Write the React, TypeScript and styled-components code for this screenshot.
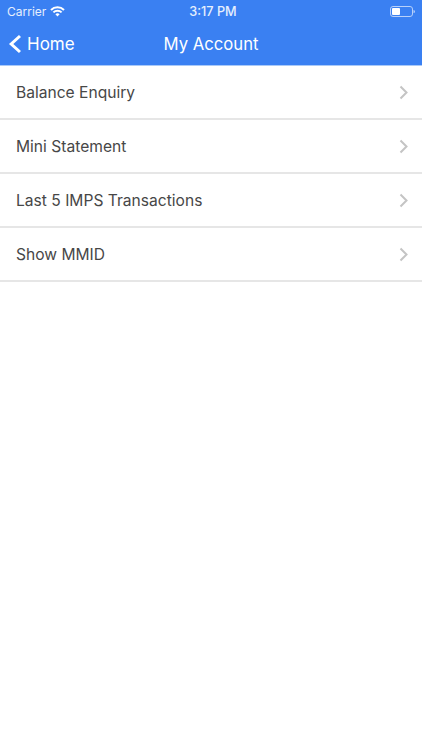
import styled, { createGlobalStyle } from 'styled-components';

const GlobalStyle = createGlobalStyle`
  html, body {
    margin: 0;
    padding: 0;
    background: #ffffff;
  }
  body {
    font-family: Inter, "Liberation Sans", sans-serif;
  }
`;

const Screen = styled.div`
  width: 422px;
  height: 750px;
  overflow: hidden;
  background: #ffffff;
`;

const Header = styled.header`
  box-sizing: border-box;
  height: 66px;
  background: #3a80f2;
  border-bottom: 1px solid #a9c9f8;
  color: #ffffff;
  display: flex;
  flex-direction: column;
`;

const StatusBar = styled.div`
  height: 22px;
  padding: 0 7px;
  display: grid;
  grid-template-columns: 1fr auto 1fr;
  align-items: center;
  font-size: 12px;
  color: #e6effd;
`;

const StatusLeft = styled.div`
  display: flex;
  align-items: center;
  gap: 4px;
`;

const StatusTime = styled.div`
  margin-left: 4px;
  font-size: 12.7px;
  font-weight: 500;
`;

const StatusRight = styled.div`
  display: flex;
  justify-content: flex-end;
`;

const NavBar = styled.div`
  flex: 1;
  padding: 0 8px;
  display: grid;
  grid-template-columns: 1fr auto 1fr;
  align-items: center;
`;

const BackLink = styled.div`
  display: flex;
  align-items: center;
  gap: 6px;
  font-size: 17px;
`;

const Title = styled.div`
  font-size: 16.7px;
`;

const List = styled.ul`
  list-style: none;
  margin: 0;
  padding: 0;
`;

const Row = styled.li`
  box-sizing: border-box;
  height: 54px;
  padding: 0 14px 0 16px;
  display: flex;
  align-items: center;
  justify-content: space-between;
  border-bottom: 2px solid #e6e6e6;
  font-size: 15.6px;
  color: #474747;
`;

const items = ['Balance Enquiry', 'Mini Statement', 'Last 5 IMPS Transactions', 'Show MMID'];

export default function App() {
  return (
    <Screen>
      <GlobalStyle />
      <Header>
        <StatusBar>
          <StatusLeft>
            Carrier
            <svg width="15" height="11" viewBox="0 0 15 11" fill="none" stroke="#ffffff" strokeWidth="2">
              <path d="M1 4a9.2 9.2 0 0 1 13 0" />
              <path d="M3.4 6.4a5.8 5.8 0 0 1 8.2 0" />
              <path d="M7.5 10.6 5.4 8.3a3 3 0 0 1 4.2 0z" fill="#ffffff" stroke="none" />
            </svg>
          </StatusLeft>
          <StatusTime>3:17 PM</StatusTime>
          <StatusRight>
            <svg width="25" height="11" viewBox="0 0 25 11" fill="none">
              <rect x="0.5" y="0.5" width="22" height="10" rx="2.5" stroke="#b7d0fa" />
              <rect x="2" y="2" width="8" height="7" rx="1" fill="#ffffff" />
              <path d="M23.5 4v3a1.5 1.5 0 0 0 0-3z" fill="#b7d0fa" />
            </svg>
          </StatusRight>
        </StatusBar>
        <NavBar>
          <BackLink>
            <svg width="13" height="20" viewBox="0 0 13 20" fill="none" stroke="#ffffff" strokeWidth="3">
              <path d="M12 2 3.2 10l8.8 8" />
            </svg>
            Home
          </BackLink>
          <Title>My Account</Title>
          <div />
        </NavBar>
      </Header>
      <List>
        {items.map((label) => (
          <Row key={label}>
            {label}
            <svg width="9" height="15" viewBox="0 0 9 15" fill="none" stroke="#c4c4c4" strokeWidth="2">
              <path d="M1.5 1.5 7.5 7.5l-6 6" />
            </svg>
          </Row>
        ))}
      </List>
    </Screen>
  );
}
